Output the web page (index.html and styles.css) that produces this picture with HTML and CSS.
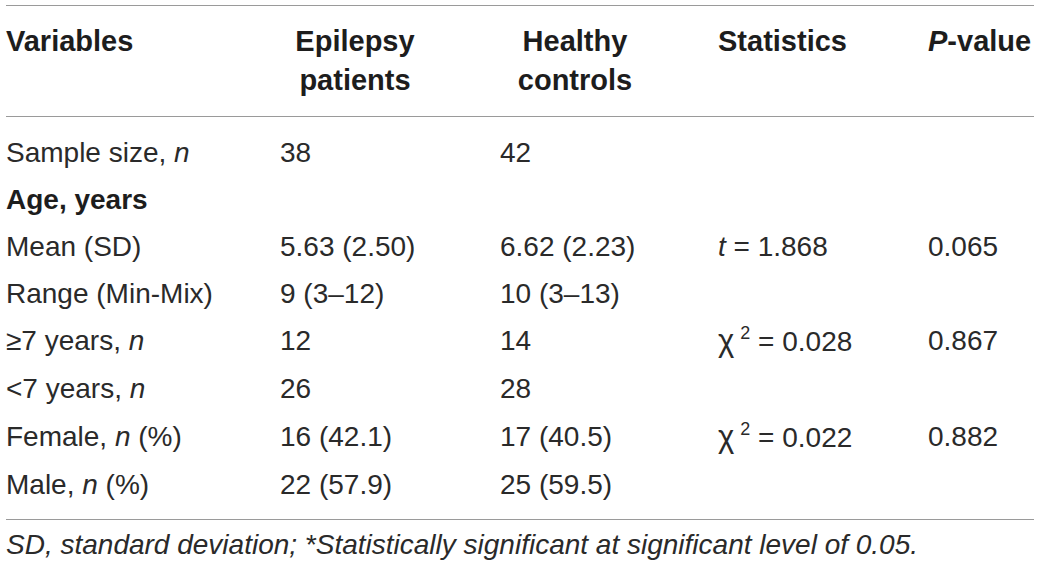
FILE: index.html
```html
<!DOCTYPE html>
<html>
<head>
<meta charset="utf-8">
<link rel="stylesheet" href="styles.css">
</head>
<body>
<div class="table">
  <div class="row head">
    <div class="cell">Variables</div>
    <div class="cell"><span class="hc">Epilepsy<br>patients</span></div>
    <div class="cell"><span class="hc">Healthy<br>controls</span></div>
    <div class="cell">Statistics</div>
    <div class="cell"><i>P</i>-value</div>
  </div>
  <div class="body">
    <div class="row">
      <div class="cell">Sample size, <i>n</i></div>
      <div class="cell">38</div>
      <div class="cell">42</div>
      <div class="cell"></div>
      <div class="cell"></div>
    </div>
    <div class="row">
      <div class="cell"><b>Age, years</b></div>
      <div class="cell"></div>
      <div class="cell"></div>
      <div class="cell"></div>
      <div class="cell"></div>
    </div>
    <div class="row">
      <div class="cell">Mean (SD)</div>
      <div class="cell">5.63 (2.50)</div>
      <div class="cell">6.62 (2.23)</div>
      <div class="cell"><i>t</i> = 1.868</div>
      <div class="cell">0.065</div>
    </div>
    <div class="row">
      <div class="cell">Range (Min-Mix)</div>
      <div class="cell">9 (3–12)</div>
      <div class="cell">10 (3–13)</div>
      <div class="cell"></div>
      <div class="cell"></div>
    </div>
    <div class="row">
      <div class="cell">≥7 years, <i>n</i></div>
      <div class="cell">12</div>
      <div class="cell">14</div>
      <div class="cell"><span class="chi">χ</span><sup>2</sup> = 0.028</div>
      <div class="cell">0.867</div>
    </div>
    <div class="row">
      <div class="cell">&lt;7 years, <i>n</i></div>
      <div class="cell">26</div>
      <div class="cell">28</div>
      <div class="cell"></div>
      <div class="cell"></div>
    </div>
    <div class="row">
      <div class="cell">Female, <i>n</i> (%)</div>
      <div class="cell">16 (42.1)</div>
      <div class="cell">17 (40.5)</div>
      <div class="cell"><span class="chi">χ</span><sup>2</sup> = 0.022</div>
      <div class="cell">0.882</div>
    </div>
    <div class="row">
      <div class="cell">Male, <i>n</i> (%)</div>
      <div class="cell">22 (57.9)</div>
      <div class="cell">25 (59.5)</div>
      <div class="cell"></div>
      <div class="cell"></div>
    </div>
  </div>
  <div class="foot">SD, standard deviation; *Statistically significant at significant level of 0.05.</div>
</div>
</body>
</html>
```
FILE: styles.css
```css
html, body {
  margin: 0;
  padding: 0;
  background: #ffffff;
}
body {
  font-family: "Liberation Sans", Arial, sans-serif;
  color: #2a2a2a;
}
.table {
  margin: 5px 6px 0 6px;
  width: 1028px;
  border-top: 1.5px solid #9a9a9a;
}
.row {
  display: grid;
  grid-template-columns: 274px 220px 218px 210px 1fr;
}
.head {
  font-weight: bold;
  font-size: 29px;
  line-height: 38.5px;
  padding: 16px 0 16.5px 0;
  border-bottom: 1.5px solid #9a9a9a;
  color: #1d1d1d;
}
.hc {
  display: block;
  width: 150px;
  text-align: center;
}
.body {
  font-size: 28px;
  line-height: 47.1px;
  padding: 12.5px 0 11px 0;
  border-bottom: 1.5px solid #9a9a9a;
}
.body b {
  color: #1d1d1d;
}
.cell {
  white-space: nowrap;
}
.chi {
  font-size: 31px;
}
sup {
  font-size: 18px;
  vertical-align: 12px;
  line-height: 0;
  margin-left: 6px;
}
.foot {
  font-style: italic;
  font-size: 28px;
  line-height: 40px;
  padding-top: 5px;
}
```
